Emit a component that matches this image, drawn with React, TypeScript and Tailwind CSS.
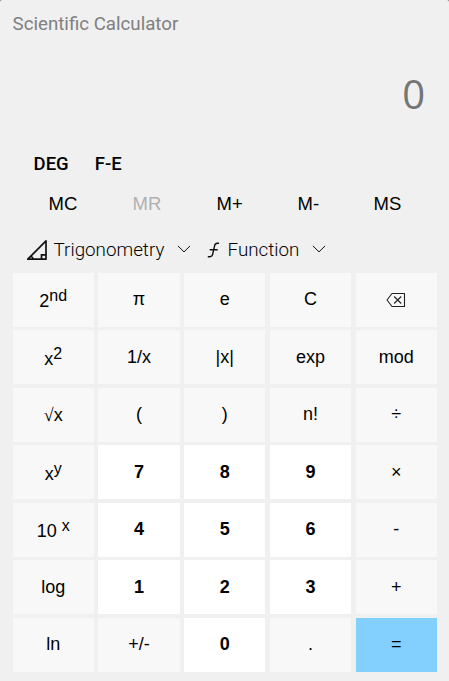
import type { ReactNode } from 'react';

const arial = "font-['Liberation_Sans',Arial,sans-serif]";

function Backspace() {
  return (
    <svg width="20" height="16" viewBox="0 0 20 16" fill="none" stroke="#222" strokeWidth="1.1">
      <path d="M6 1.5H18.5V14.5H6L1 8Z" strokeLinejoin="round" />
      <path d="M8.2 4.5L15.2 11.5M15.2 4.5L8.2 11.5" />
    </svg>
  );
}

function Chevron() {
  return (
    <svg className="relative -top-px" width="14" height="8" viewBox="0 0 14 8" fill="none" stroke="#111" strokeWidth="1">
      <path d="M0.9 0.9L7 6.9L13.1 0.9" />
    </svg>
  );
}

function Triangle() {
  return (
    <svg width="22" height="22" viewBox="0 0 22 22" fill="none" stroke="#111" strokeWidth="1.7">
      <path d="M1.8 20.2L20 1.8V20.2Z" strokeLinejoin="round" />
      <path d="M15.5 20V15.8H20M4.8 17.2Q7 18 7 20" />
    </svg>
  );
}

function FunctionMark() {
  return (
    <svg width="14" height="16" viewBox="0 0 14 16" fill="none" stroke="#111" strokeWidth="1.4">
      <path d="M12 1.2H10.4Q8.2 1.2 7.7 3.4L5.7 12.2Q5.2 14.7 3 14.7H0.8M2.7 7.8H10.7" />
    </svg>
  );
}

function Sup({ children }: { children: ReactNode }) {
  return <span className="relative -top-[6px] text-[16px]">{children}</span>;
}

type Key = { id: string; label: ReactNode; kind?: 'digit' | 'equals' };

const digit = (n: string): Key => ({ id: n, label: n, kind: 'digit' });
const op = (s: string): Key => ({ id: s, label: s });

const keys: Key[] = [
  { id: '2nd', label: <span className="relative top-[2px]">2<Sup>nd</Sup></span> },
  op('π'), op('e'), op('C'),
  { id: 'back', label: <Backspace /> },
  { id: 'sq', label: <span className="relative top-[2px]">x<Sup>2</Sup></span> },
  op('1/x'), op('|x|'), op('exp'), op('mod'),
  {
    id: 'sqrt',
    label: (
      <span className="relative top-px">
        <span className="font-['Liberation_Serif',serif]">√</span>x
      </span>
    ),
  },
  op('('), op(')'), op('n!'), op('÷'),
  { id: 'pow', label: <span className="relative top-[2px]">x<Sup>y</Sup></span> },
  digit('7'), digit('8'), digit('9'), op('×'),
  { id: 'ten', label: <span className="relative top-[2px]">10 <Sup>x</Sup></span> },
  digit('4'), digit('5'), digit('6'), op('-'),
  op('log'), digit('1'), digit('2'), digit('3'), op('+'),
  op('ln'), op('+/-'), digit('0'), op('.'),
  { id: 'eq', label: '=', kind: 'equals' },
];

const tone = {
  digit: 'bg-white font-bold',
  equals: 'bg-[#83d0ff]',
  plain: 'bg-[#f8f8f8]',
};

export default function App() {
  return (
    <div className="h-[681px] w-[449px] bg-[#777]">
      <main className="flex h-full flex-col rounded-t-[2px] bg-[#f0f0f0] pl-[12.6px] text-black">
        <h1 className="h-[47px] pt-[10px] font-['Roboto',sans-serif] text-[18.7px] leading-[28px] text-[#808080]">
          Scientific Calculator
        </h1>
        <div className="h-[101px] pt-[19px] pr-[24px] text-right font-['Open_Sans',sans-serif] text-[40px] leading-[56px] text-[#757575]">
          0
        </div>
        <div className="flex h-[33px] items-center gap-[26px] pl-[21px] font-['Roboto',sans-serif] text-[18.5px] font-medium">
          <button>DEG</button>
          <button>F-E</button>
        </div>
        <div className={`flex h-[46px] items-center pl-[36px] text-[18.5px] ${arial}`}>
          <button className="w-[84px] text-left">MC</button>
          <button className="w-[84px] text-left text-[#b0b0b0]">MR</button>
          <button className="w-[81px] text-left">M+</button>
          <button className="w-[76px] text-left">M-</button>
          <button>MS</button>
        </div>
        <div className="flex h-[45.9px] items-center pl-[13px] font-['Roboto',sans-serif] text-[18.8px] font-light">
          <button className="flex w-[181px] items-center">
            <Triangle />
            <span className="mr-[13px] ml-[6px]">Trigonometry</span>
            <Chevron />
          </button>
          <button className="flex items-center">
            <FunctionMark />
            <span className="mr-[13px] ml-[7px]">Function</span>
            <Chevron />
          </button>
        </div>
        <div className={`grid grid-cols-[repeat(5,81.2px)] grid-rows-[repeat(7,54px)] gap-x-[4.6px] gap-y-[3.5px] text-[18px] ${arial}`}>
          {keys.map((k) => (
            <button key={k.id} className={`flex items-center justify-center whitespace-pre ${tone[k.kind ?? 'plain']}`}>
              {k.label}
            </button>
          ))}
        </div>
      </main>
    </div>
  );
}
